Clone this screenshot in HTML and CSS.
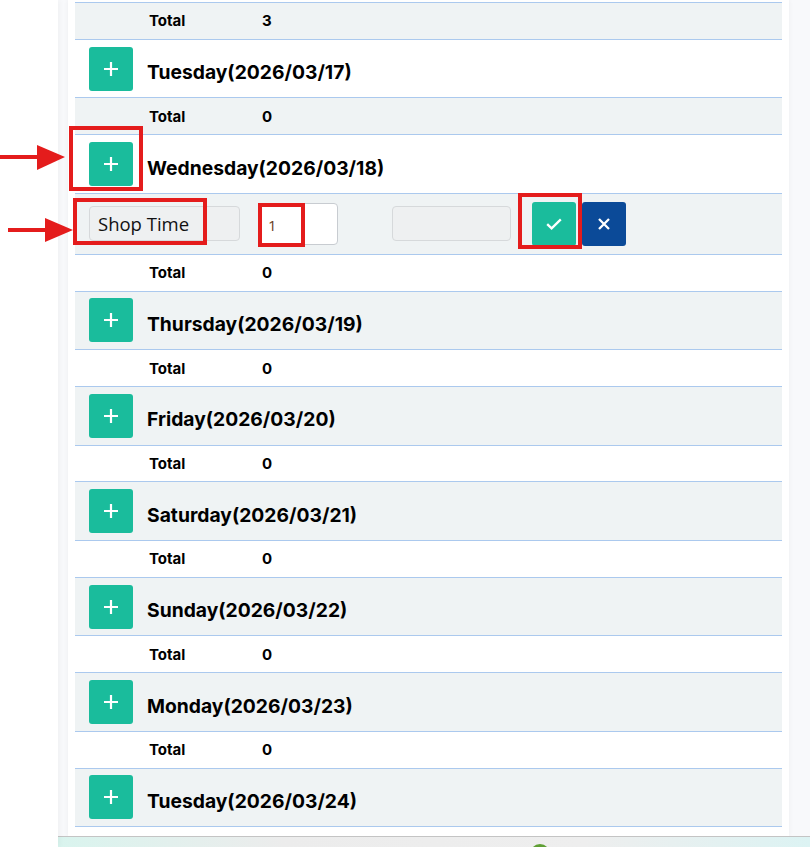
FILE: index.html
```html
<!DOCTYPE html>
<html lang="en">
<head>
<meta charset="utf-8">
<title>Schedule</title>
<link rel="stylesheet" href="styles.css">
</head>
<body>
<div class="layout">
  <aside class="sidebar"></aside>
  <main class="main">
    <div class="content">
      <div class="card">
        <div class="table">
          <div class="row total-row"><span class="total-label">Total</span><span class="total-value">3</span></div>
          <div class="row day-row"><button class="btn-add"><svg viewBox="0 0 14 14" width="14" height="14"><path d="M7 0V14M0 7H14" stroke="#fff" stroke-width="2.2"/></svg></button><h3 class="day-title">Tuesday(2026/03/17)</h3></div>
          <div class="row total-row"><span class="total-label">Total</span><span class="total-value">0</span></div>
          <div class="row day-row"><button class="btn-add"><svg viewBox="0 0 14 14" width="14" height="14"><path d="M7 0V14M0 7H14" stroke="#fff" stroke-width="2.2"/></svg></button><h3 class="day-title">Wednesday(2026/03/18)</h3></div>
          <div class="row edit-row">
            <input class="field field-name" type="text" value="Shop Time" disabled>
            <input class="field field-qty" type="text" value="1">
            <input class="field field-note" type="text" value="" disabled>
            <button class="btn-icon btn-ok"><svg viewBox="0 0 16 12" width="16" height="12"><path d="M1.2 6.2L5.6 10.4L14.8 1.4" fill="none" stroke="#fff" stroke-width="2.3"/></svg></button>
            <button class="btn-icon btn-cancel"><svg viewBox="0 0 12 12" width="12" height="12"><path d="M1 1L11 11M11 1L1 11" stroke="#fff" stroke-width="2.3"/></svg></button>
          </div>
          <div class="row total-row"><span class="total-label">Total</span><span class="total-value">0</span></div>
          <div class="row day-row"><button class="btn-add"><svg viewBox="0 0 14 14" width="14" height="14"><path d="M7 0V14M0 7H14" stroke="#fff" stroke-width="2.2"/></svg></button><h3 class="day-title">Thursday(2026/03/19)</h3></div>
          <div class="row total-row"><span class="total-label">Total</span><span class="total-value">0</span></div>
          <div class="row day-row"><button class="btn-add"><svg viewBox="0 0 14 14" width="14" height="14"><path d="M7 0V14M0 7H14" stroke="#fff" stroke-width="2.2"/></svg></button><h3 class="day-title">Friday(2026/03/20)</h3></div>
          <div class="row total-row"><span class="total-label">Total</span><span class="total-value">0</span></div>
          <div class="row day-row"><button class="btn-add"><svg viewBox="0 0 14 14" width="14" height="14"><path d="M7 0V14M0 7H14" stroke="#fff" stroke-width="2.2"/></svg></button><h3 class="day-title">Saturday(2026/03/21)</h3></div>
          <div class="row total-row"><span class="total-label">Total</span><span class="total-value">0</span></div>
          <div class="row day-row"><button class="btn-add"><svg viewBox="0 0 14 14" width="14" height="14"><path d="M7 0V14M0 7H14" stroke="#fff" stroke-width="2.2"/></svg></button><h3 class="day-title">Sunday(2026/03/22)</h3></div>
          <div class="row total-row"><span class="total-label">Total</span><span class="total-value">0</span></div>
          <div class="row day-row"><button class="btn-add"><svg viewBox="0 0 14 14" width="14" height="14"><path d="M7 0V14M0 7H14" stroke="#fff" stroke-width="2.2"/></svg></button><h3 class="day-title">Monday(2026/03/23)</h3></div>
          <div class="row total-row"><span class="total-label">Total</span><span class="total-value">0</span></div>
          <div class="row day-row"><button class="btn-add"><svg viewBox="0 0 14 14" width="14" height="14"><path d="M7 0V14M0 7H14" stroke="#fff" stroke-width="2.2"/></svg></button><h3 class="day-title">Tuesday(2026/03/24)</h3></div>
        </div>
      </div>
    </div>
    <footer class="footer"><span class="footer-dot"></span></footer>
  </main>
</div>

<div class="annotations">
  <div class="mark mark-add"></div>
  <div class="mark mark-name"></div>
  <div class="mark mark-qty"></div>
  <div class="mark mark-ok"></div>
  <svg class="arrow arrow-1" viewBox="0 0 66 28" width="66" height="28"><rect x="0" y="11" width="40" height="4" fill="#e41c1c"/><path d="M37 1L65 13L37 26Z" fill="#e41c1c"/></svg>
  <svg class="arrow arrow-2" viewBox="0 0 66 28" width="66" height="28"><rect x="0" y="11" width="40" height="4" fill="#e41c1c"/><path d="M37 1L65 13L37 25Z" fill="#e41c1c"/></svg>
</div>
</body>
</html>
```

FILE: styles.css
```css
* { box-sizing: border-box; }

html, body {
  margin: 0;
  padding: 0;
  height: 100%;
  overflow: hidden;
  background: #ffffff;
  font-family: Inter, "Noto Sans", sans-serif;
  color: #000;
}

body { position: relative; }

.layout {
  display: flex;
  height: 100%;
}

.sidebar {
  width: 58px;
  flex: 0 0 58px;
  background: #ffffff;
  position: relative;
  z-index: 1;
  box-shadow: 2px 0 5px rgba(0, 0, 0, 0.035);
}

.main {
  flex: 1;
  display: flex;
  flex-direction: column;
  background: #f8f9fb;
  min-width: 0;
}

.content {
  padding: 0 21px 0 10px;
}

.card {
  background: #ffffff;
  padding: 2px 7px 9px 7px;
  box-shadow: 0 0 5px rgba(0, 0, 0, 0.05);
}

.table {
  display: flex;
  flex-direction: column;
  border-bottom: 1px solid #abc9ee;
}

.row {
  display: flex;
  align-items: center;
  border-top: 1px solid #abc9ee;
  background: #ffffff;
}

.row:nth-child(odd) { background: #eff3f4; }

.total-row {
  height: 36.8px;
  padding-left: 74px;
  font-size: 15px;
  font-weight: 700;
}

.total-label { width: 113px; }

.day-row {
  height: 58.62px;
  padding-left: 14px;
  gap: 14px;
}

.btn-add {
  width: 44px;
  height: 44px;
  border: none;
  border-radius: 3px;
  background: #1abc9c;
  padding: 0;
  display: flex;
  align-items: center;
  justify-content: center;
}

.day-title {
  margin: 7px 0 0 0;
  font-size: 19.3px;
  font-weight: 700;
}

.edit-row {
  height: 61px;
  padding: 0 14px;
}

.field {
  font-family: "Open Sans", "Noto Sans", sans-serif;
  border-radius: 4px;
  outline: none;
  margin: 0;
  opacity: 1;
}

.field-name {
  width: 151px;
  height: 35px;
  background: #eef0f1;
  border: 1px solid #d6d9db;
  padding: 0 0 0 8px;
  font-size: 18.5px;
  color: #111;
  -webkit-text-fill-color: #111;
}

.field-qty {
  width: 80px;
  height: 42px;
  margin-left: 18px;
  background: #ffffff;
  border: 1px solid #c8ccd1;
  padding: 2px 0 0 9px;
  font-size: 15px;
  font-weight: 400;
  color: #6b3d1c;
}

.field-note {
  width: 119px;
  height: 35px;
  margin-left: 54px;
  background: #eef0f1;
  border: 1px solid #d6d9db;
}

.btn-icon {
  width: 44px;
  height: 44px;
  border: none;
  border-radius: 3px;
  padding: 0;
  display: flex;
  align-items: center;
  justify-content: center;
}

.btn-ok {
  margin-left: 21px;
  background: #1abc9c;
}

.btn-cancel {
  margin-left: 6px;
  background: #0b4a98;
}

.footer {
  flex: 0 0 40px;
  border-top: 1px solid #c4c4c4;
  background: linear-gradient(90deg, #d9f4ee 0%, #ececec 30%, #eeeeee 70%, #dcf3f3 100%);
  padding: 7px 0 0 472px;
}

.footer-dot {
  display: block;
  width: 20px;
  height: 20px;
  border-radius: 50%;
  background: #5f9f34;
}

.annotations {
  position: absolute;
  inset: 0;
  z-index: 10;
  pointer-events: none;
}

.mark {
  position: absolute;
  border: 4.5px solid #e41c1c;
}

.mark-add { left: 69px; top: 126px; width: 74px; height: 65px; }
.mark-name { left: 73px; top: 198px; width: 134px; height: 47px; }
.mark-qty { left: 258px; top: 203px; width: 47px; height: 44px; }
.mark-ok { left: 518px; top: 193px; width: 64px; height: 56px; }

.arrow { position: absolute; }
.arrow-1 { left: 0; top: 144px; }
.arrow-2 { left: 8px; top: 217px; }
```
